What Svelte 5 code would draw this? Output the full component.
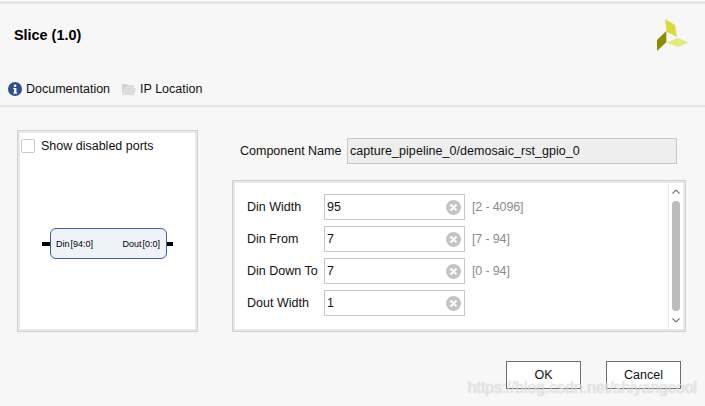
<script>
	const params = [
		{ label: 'Din Width', value: '95', range: '[2 - 4096]' },
		{ label: 'Din From', value: '7', range: '[7 - 94]' },
		{ label: 'Din Down To', value: '7', range: '[0 - 94]' },
		{ label: 'Dout Width', value: '1', range: '' }
	];
</script>

<div class="dialog">
	<header class="header">
		<h1>Slice (1.0)</h1>
		<svg class="logo" width="32" height="32" viewBox="0 0 32 32">
			<polygon points="8,0 18,6 20,18 9.700,12.700" fill="#d9dc3c" />
			<polygon points="9.700,23.700 20.300,19 31.700,23.300 21.300,28" fill="#e6e97e" />
			<polygon points="0,21 9.300,12 9.300,23.300 0,32" fill="#8c8c00" />
		</svg>
	</header>

	<nav class="toolbar">
		<span class="link">
			<svg width="14" height="14" viewBox="0 0 14 14">
				<circle cx="7" cy="7" r="7" fill="#2f4f8a" />
				<rect x="6" y="6" width="2.400" height="5.500" fill="#fff" />
				<rect x="5.200" y="6" width="2" height="1" fill="#fff" />
				<rect x="5.200" y="10.500" width="4" height="1" fill="#fff" />
				<circle cx="7.100" cy="3.800" r="1.300" fill="#fff" />
			</svg>
			Documentation
		</span>
		<span class="link">
			<svg width="14" height="12" viewBox="0 0 14 12">
				<path d="M0 1h5l1 1.500h6v2H3L0 11z" fill="#d2d2d2" />
				<path d="M3 5h11l-2 7H0z" fill="#dcdcdc" />
			</svg>
			IP Location
		</span>
	</nav>

	<main class="body">
		<section class="preview">
			<label class="check"><span class="box"></span>Show disabled ports</label>
			<div class="symbol">
				<span class="pin"></span>
				<div class="block">
					<span>Din [94:0]</span>
					<span>Dout [0:0]</span>
				</div>
				<span class="pin out"></span>
			</div>
		</section>

		<section class="config">
			<div class="name-row">
				<span>Component Name</span>
				<div class="name-input">capture_pipeline_0/demosaic_rst_gpio_0</div>
			</div>

			<div class="params">
				<div class="rows">
					{#each params as p}
						<div class="row">
							<span class="label">{p.label}</span>
							<div class="field">
								<span>{p.value}</span>
								<svg width="15" height="15" viewBox="0 0 15 15">
									<circle cx="7.500" cy="7.500" r="7.500" fill="#c4c4c4" />
									<path d="M4.500 4.500l6 6M10.500 4.500l-6 6" stroke="#fff" stroke-width="2" />
								</svg>
							</div>
							<span class="range">{p.range}</span>
						</div>
					{/each}
				</div>
				<div class="scrollbar">
					<svg width="8" height="5" viewBox="0 0 8 5"><path d="M.5 4.500L4 1l3.500 3.500" fill="none" stroke="#777" stroke-width="1.200" /></svg>
					<div class="thumb"></div>
					<svg width="8" height="5" viewBox="0 0 8 5"><path d="M.5.500L4 4 7.500.500" fill="none" stroke="#777" stroke-width="1.200" /></svg>
				</div>
			</div>
		</section>
	</main>

	<footer class="footer">
		<button>OK</button>
		<button>Cancel</button>
	</footer>

	<div class="watermark">https://blog.csdn.net/shiyangcool</div>
</div>

<style>
	:global(body) {
		margin: 0;
	}

	.dialog {
		position: relative;
		width: 705px;
		height: 406px;
		box-sizing: border-box;
		overflow: hidden;
		background: #f7f7f7;
		border-top: 1px solid #fff;
		font-family: 'Liberation Sans', Arial, sans-serif;
		font-size: 12.500px;
		color: #111;
	}

	.header {
		display: flex;
		justify-content: space-between;
		height: 69px;
		padding: 0 16px 0 14px;
		border-top: 3px solid #e6e6e6;
	}

	h1 {
		margin: 24px 0 0;
		font-size: 14.400px;
		line-height: 15px;
		font-weight: bold;
		color: #000;
	}

	.logo {
		margin-top: 15px;
	}

	.toolbar {
		display: flex;
		gap: 12px;
		align-items: center;
		height: 32px;
		padding-left: 8px;
		border-bottom: 2px solid #e6e6e6;
	}

	.link {
		display: flex;
		align-items: center;
		gap: 4px;
	}

	.body {
		display: flex;
		gap: 34px;
		padding: 23px 0 0 17px;
	}

	.preview {
		display: flex;
		flex-direction: column;
		box-sizing: border-box;
		width: 181px;
		height: 202px;
		background: #fff;
		border: 1px solid #d0d0d0;
		outline: 2px solid #e8e8e8;
		outline-offset: -3px;
	}

	.check {
		display: flex;
		align-items: center;
		gap: 6px;
		margin: 8px 0 0 3px;
	}

	.box {
		width: 12px;
		height: 12px;
		background: #fff;
		border: 1px solid #c8c8c8;
		border-radius: 2px;
	}

	.symbol {
		display: flex;
		align-items: center;
		margin: 75px 0 0 24px;
	}

	.pin {
		width: 8px;
		height: 4px;
		background: #000;
	}

	.pin.out {
		width: 6px;
	}

	.block {
		display: flex;
		justify-content: space-between;
		align-items: center;
		box-sizing: border-box;
		width: 117px;
		height: 31px;
		padding: 0 6px 0 5px;
		background: #eef3fa;
		border: 1px solid #3a5fa5;
		border-radius: 6px;
		font-size: 9px;
		word-spacing: -1.500px;
		color: #000;
	}

	.config {
		display: flex;
		flex-direction: column;
		width: 454px;
	}

	.name-row {
		display: flex;
		align-items: center;
		justify-content: space-between;
		margin: 8px 9px 16px 8px;
	}

	.name-input {
		box-sizing: border-box;
		width: 330px;
		height: 26px;
		padding: 0 2px;
		line-height: 24px;
		letter-spacing: 0.050px;
		background: #eeeeee;
		border: 1px solid #c8c8c8;
	}

	.params {
		display: flex;
		justify-content: space-between;
		box-sizing: border-box;
		height: 152px;
		background: #fff;
		border: 1px solid #d0d0d0;
		outline: 2px solid #e8e8e8;
		outline-offset: -3px;
	}

	.rows {
		display: flex;
		flex-direction: column;
		gap: 6px;
		padding: 13px 0 0 14px;
	}

	.row {
		display: flex;
		align-items: center;
		height: 26px;
	}

	.label {
		width: 77px;
	}

	.field {
		display: flex;
		justify-content: space-between;
		align-items: center;
		box-sizing: border-box;
		width: 141px;
		height: 26px;
		padding: 0 3px 0 2px;
		border: 1px solid #c8c8c8;
	}

	.range {
		margin-left: 7px;
		letter-spacing: -0.150px;
		color: #8a8a8a;
	}

	.scrollbar {
		display: flex;
		flex-direction: column;
		align-items: center;
		justify-content: space-between;
		box-sizing: border-box;
		width: 14px;
		margin: 2px 3px 2px 0;
		padding: 6px 0;
		border-left: 1px solid #eeeeee;
	}

	.thumb {
		width: 8px;
		height: 110px;
		margin-top: -1px;
		background: #bcbcbc;
		border-radius: 4px;
	}

	.footer {
		display: flex;
		justify-content: flex-end;
		gap: 25px;
		padding: 29px 24px 0 0;
	}

	button {
		box-sizing: border-box;
		width: 75px;
		height: 28px;
		padding: 0;
		background: #fff;
		border: 1px solid #6e6e6e;
		border-radius: 0;
		font: inherit;
		color: #111;
	}

	.watermark {
		position: absolute;
		right: 8px;
		bottom: 12px;
		font-size: 15.800px;
		line-height: 13px;
		color: rgba(255, 255, 255, 0.6);
		text-shadow: 0 0 1px rgba(130, 130, 130, 0.55);
	}
</style>
